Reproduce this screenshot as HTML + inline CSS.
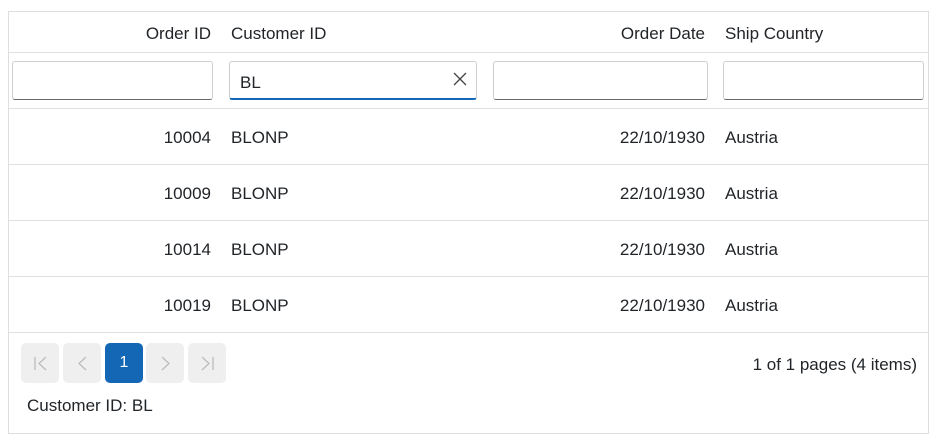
<!DOCTYPE html>
<html><head><style>
body{margin:0;width:934px;height:442px;background:#fff;font-family:"Segoe UI","Liberation Sans",sans-serif;font-size:17px;color:#212529;position:relative;overflow:hidden}
.a{position:absolute;white-space:nowrap}
.grid{position:absolute;left:8px;top:11px;width:919px;height:421px;border:1px solid #dedede}
.hl{position:absolute;left:9px;width:919px;height:1px;background:#e0e0e0}
.inp{position:absolute;top:61px;height:37px;border:1px solid #cfcfcf;border-bottom:1px solid #6a6a6a;border-radius:3px;background:#fff}
.r{text-align:right}
.btn{position:absolute;top:343px;width:38px;height:40px;border-radius:5px;background:#efefef}
</style></head><body>
<div class="grid"></div>
<div class="hl" style="top:52px"></div>
<div class="hl" style="top:108px"></div>
<div class="hl" style="top:164px"></div>
<div class="hl" style="top:220px"></div>
<div class="hl" style="top:276px"></div>
<div class="hl" style="top:332px"></div>

<div class="a r" style="right:723px;top:24px">Order ID</div>
<div class="a" style="left:231px;top:24px">Customer ID</div>
<div class="a r" style="right:229px;top:24px">Order Date</div>
<div class="a" style="left:725px;top:24px">Ship Country</div>

<div class="inp" style="left:12px;width:199px"></div>
<div class="inp" style="left:229px;width:246px;border-bottom:2px solid #1467b5;height:36px"></div>
<div class="a" style="left:240px;top:73px">BL</div>
<svg class="a" style="left:453px;top:72px" width="14" height="14" viewBox="0 0 14 14"><path d="M1 1L13 13M13 1L1 13" stroke="#444" stroke-width="1.3" fill="none"/></svg>
<div class="inp" style="left:493px;width:213px"></div>
<div class="inp" style="left:723px;width:199px"></div>

<div class="a r" style="right:723px;top:128px">10004</div><div class="a" style="left:231px;top:128px">BLONP</div><div class="a r" style="right:229px;top:128px">22/10/1930</div><div class="a" style="left:725px;top:128px">Austria</div>
<div class="a r" style="right:723px;top:184px">10009</div><div class="a" style="left:231px;top:184px">BLONP</div><div class="a r" style="right:229px;top:184px">22/10/1930</div><div class="a" style="left:725px;top:184px">Austria</div>
<div class="a r" style="right:723px;top:240px">10014</div><div class="a" style="left:231px;top:240px">BLONP</div><div class="a r" style="right:229px;top:240px">22/10/1930</div><div class="a" style="left:725px;top:240px">Austria</div>
<div class="a r" style="right:723px;top:296px">10019</div><div class="a" style="left:231px;top:296px">BLONP</div><div class="a r" style="right:229px;top:296px">22/10/1930</div><div class="a" style="left:725px;top:296px">Austria</div>

<div class="btn" style="left:21px"><svg width="38" height="40"><path d="M14 14V27M25 14L18 20.5L25 27" stroke="#bdbdbd" stroke-width="1.3" fill="none"/></svg></div>
<div class="btn" style="left:63px"><svg width="38" height="40"><path d="M23 14L16 20.5L23 27" stroke="#bdbdbd" stroke-width="1.3" fill="none"/></svg></div>
<div class="btn" style="left:105px;background:#1467b5;color:#fff;text-align:center;line-height:40px;font-size:16px">1</div>
<div class="btn" style="left:146px"><svg width="38" height="40"><path d="M16 14L23 20.5L16 27" stroke="#bdbdbd" stroke-width="1.3" fill="none"/></svg></div>
<div class="btn" style="left:188px"><svg width="38" height="40"><path d="M14 14L21 20.5L14 27M25 14V27" stroke="#bdbdbd" stroke-width="1.3" fill="none"/></svg></div>

<div class="a r" style="right:17px;top:355px">1 of 1 pages (4 items)</div>
<div class="a" style="left:27px;top:396px">Customer ID: BL</div>
</body></html>
